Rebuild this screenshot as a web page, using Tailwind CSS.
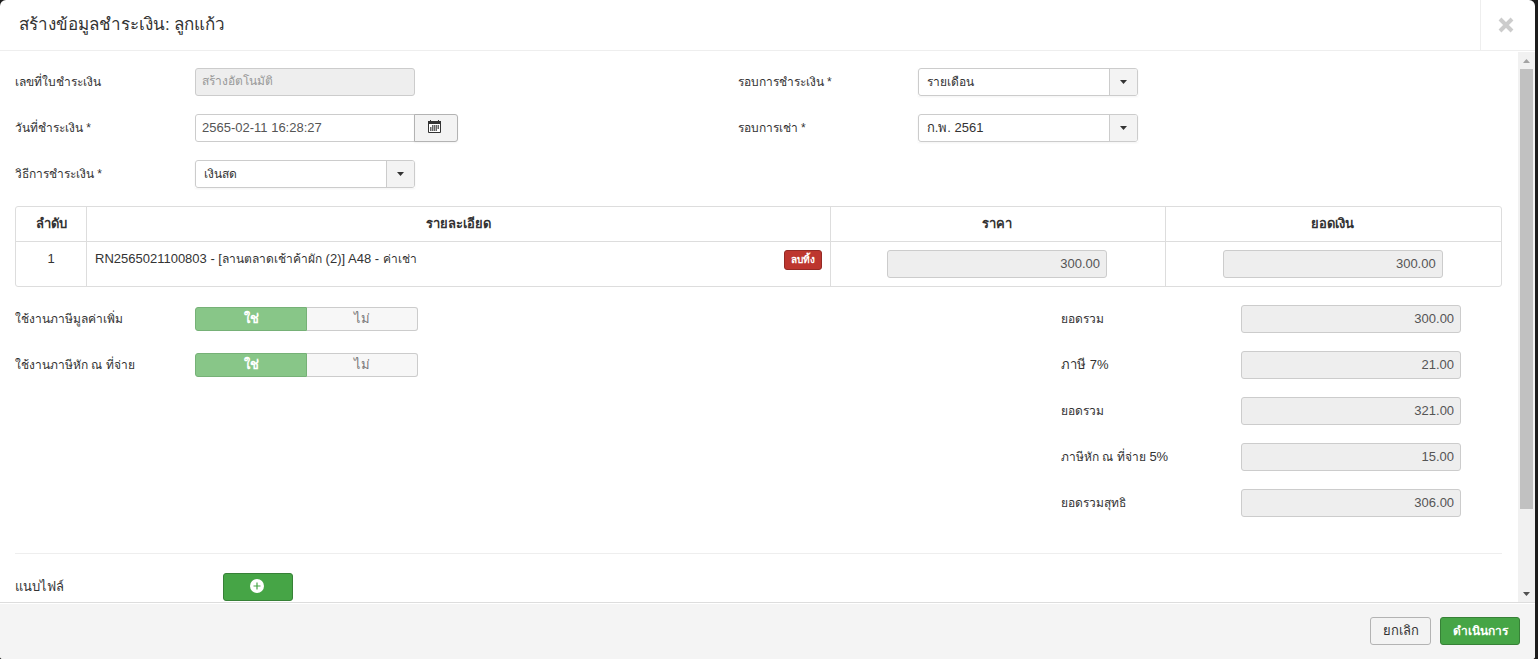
<!DOCTYPE html>
<html lang="th">
<head>
<meta charset="utf-8">
<title>สร้างข้อมูลชำระเงิน</title>
<script src="https://cdn.jsdelivr.net/npm/@tailwindcss/browser@4"></script>
</head>
<body class="h-screen overflow-hidden bg-[#1c1c1c] pr-[3px] font-['Liberation_Sans',sans-serif] text-[13px] leading-[18px] text-[#333]">
<div role="dialog" aria-labelledby="title" class="flex h-full flex-col overflow-hidden rounded-t-md rounded-b-[3px] bg-white">
  <header class="flex h-[51px] shrink-0 items-stretch border-b border-[#eee]">
    <h3 id="title" class="flex-1 self-center pl-[19px] text-[17px] leading-[24px]">สร้างข้อมูลชำระเงิน: ลูกแก้ว</h3>
    <button type="button" aria-label="ปิด" class="flex w-[55px] items-center justify-center border-l border-[#eee] pr-1">
      <svg class="size-4" viewBox="0 0 16 16" fill="none" stroke="#ccc" stroke-width="4"><path d="M2 2l12 12M14 2L2 14"/></svg>
    </button>
  </header>

  <div class="flex min-h-0 flex-1">
    <main class="min-w-0 flex-1 overflow-hidden pr-4 pl-[15px] pt-[17px]">
      <div class="flex">
        <div class="flex w-[48.6%] flex-col gap-[18px]">
          <div class="flex h-7 items-center">
            <label for="no" class="w-[180px] text-xs">เลขที่ใบชำระเงิน</label>
            <input id="no" disabled placeholder="สร้างอัตโนมัติ" class="h-7 w-[220px] rounded-[3px] border border-[#ccc] bg-[#eee] px-1.5 pb-0.5 text-xs placeholder:text-[#999]">
          </div>
          <div class="flex h-7 items-center">
            <label for="date" class="w-[180px] text-xs">วันที่ชำระเงิน *</label>
            <input id="date" value="2565-02-11 16:28:27" class="h-7 w-[220px] rounded-l-[3px] border border-[#ccc] bg-white px-1.5 pb-0.5 text-[#555]">
            <button type="button" aria-label="เลือกวันที่" class="-ml-px flex h-7 w-11 items-center justify-center rounded-r-[3px] border border-[#b3b3b3] bg-[#f3f3f3] pr-1 pb-1 shadow-xs">
              <svg class="size-[13px]" viewBox="0 0 13 13" fill="none"><path d="M.5 3.500h12v9H.5z" fill="#fff" stroke="#333"/><path d="M0 1h2V0h1v1h7V0h1v1h2v3H0z" fill="#333"/><path d="M4 6h7M2 8h9M2 10h7" stroke="#333" stroke-width="1.500" stroke-dasharray="1.500 .5"/></svg>
            </button>
          </div>
          <div class="flex h-7 items-center">
            <label for="method" class="w-[180px] text-xs">วิธีการชำระเงิน *</label>
            <div class="grid w-[220px] shadow-xs">
              <select id="method" class="col-start-1 row-start-1 h-7 appearance-none rounded-[3px] border border-[#ccc] bg-white px-2 text-xs text-[#333]"><option>เงินสด</option></select>
              <span class="pointer-events-none col-start-1 row-start-1 my-px mr-px flex w-7 items-center justify-center justify-self-end rounded-r-[2px] border-l border-[#ccc] bg-[#f3f3f3]"><svg class="h-1 w-[7px]" viewBox="0 0 7 4"><path d="M0 0h7L3.500 4z" fill="#333"/></svg></span>
            </div>
          </div>
        </div>
        <div class="flex flex-1 flex-col gap-[18px]">
          <div class="flex h-7 items-center">
            <label for="cycle" class="w-[180px] text-xs">รอบการชำระเงิน *</label>
            <div class="grid w-[220px] shadow-xs">
              <select id="cycle" class="col-start-1 row-start-1 h-7 appearance-none rounded-[3px] border border-[#ccc] bg-white px-2 text-xs text-[#333]"><option>รายเดือน</option></select>
              <span class="pointer-events-none col-start-1 row-start-1 my-px mr-px flex w-7 items-center justify-center justify-self-end rounded-r-[2px] border-l border-[#ccc] bg-[#f3f3f3]"><svg class="h-1 w-[7px]" viewBox="0 0 7 4"><path d="M0 0h7L3.500 4z" fill="#333"/></svg></span>
            </div>
          </div>
          <div class="flex h-7 items-center">
            <label for="rent" class="w-[180px] text-xs">รอบการเช่า *</label>
            <div class="grid w-[220px] shadow-xs">
              <select id="rent" class="col-start-1 row-start-1 h-7 appearance-none rounded-[3px] border border-[#ccc] bg-white px-2 text-[#333]"><option>ก.พ. 2561</option></select>
              <span class="pointer-events-none col-start-1 row-start-1 my-px mr-px flex w-7 items-center justify-center justify-self-end rounded-r-[2px] border-l border-[#ccc] bg-[#f3f3f3]"><svg class="h-1 w-[7px]" viewBox="0 0 7 4"><path d="M0 0h7L3.500 4z" fill="#333"/></svg></span>
            </div>
          </div>
        </div>
      </div>

      <table class="mt-[18px] w-full table-fixed border-separate border-spacing-0 rounded-[3px] border border-[#ddd]">
        <thead>
          <tr class="h-[34px]">
            <th class="w-[70px]">ลำดับ</th>
            <th class="border-l border-[#ddd]">รายละเอียด</th>
            <th class="w-[22.6%] border-l border-[#ddd] pr-0.5">ราคา</th>
            <th class="w-[22.6%] border-l border-[#ddd] pr-0.5">ยอดเงิน</th>
          </tr>
        </thead>
        <tbody>
          <tr class="align-top">
            <td class="border-t border-[#ddd] p-2 text-center">1</td>
            <td class="border-t border-l border-[#ddd] p-2">
              <div class="flex items-start justify-between">
                <span>RN2565021100803 - [<span class="text-xs">ลานตลาดเช้าค้าผัก</span> (2)] A48 - <span class="text-xs">ค่าเช่า</span></span>
                <button type="button" class="h-5 w-[38px] rounded-[3px] border border-[#942a25] bg-[#bd362f] text-[10px] leading-[16px] font-bold text-white">ลบทิ้ง</button>
              </div>
            </td>
            <td class="border-t border-l border-[#ddd] p-2 pr-2.5"><input aria-label="ราคา" readonly value="300.00" class="mx-auto block h-7 w-[220px] rounded-[3px] border border-[#ccc] bg-[#eee] px-1.5 pb-0.5 text-right text-[#555]"></td>
            <td class="border-t border-l border-[#ddd] p-2 pr-2.5"><input aria-label="ยอดเงิน" readonly value="300.00" class="mx-auto block h-7 w-[220px] rounded-[3px] border border-[#ccc] bg-[#eee] px-1.5 pb-0.5 text-right text-[#555]"></td>
          </tr>
        </tbody>
      </table>

      <div class="mt-[18px] flex">
        <div class="flex w-[70.35%] flex-col gap-[18px]">
          <div role="radiogroup" aria-labelledby="vat" class="flex h-7 items-center">
            <span id="vat" class="w-[180px] text-xs">ใช้งานภาษีมูลค่าเพิ่ม</span>
            <label class="flex h-6 w-28 items-center justify-center rounded-l-[3px] border border-[#76b177] bg-[#88c688] font-bold text-white"><input type="radio" name="vat" checked disabled class="sr-only">ใช่</label>
            <label class="flex h-6 w-[111px] items-center justify-center rounded-r-[3px] border border-l-0 border-[#ccc] bg-[#f7f7f7] text-[#777]"><input type="radio" name="vat" disabled class="sr-only">ไม่</label>
          </div>
          <div role="radiogroup" aria-labelledby="wht" class="flex h-7 items-center">
            <span id="wht" class="w-[180px] text-xs">ใช้งานภาษีหัก ณ ที่จ่าย</span>
            <label class="flex h-6 w-28 items-center justify-center rounded-l-[3px] border border-[#76b177] bg-[#88c688] font-bold text-white"><input type="radio" name="wht" checked disabled class="sr-only">ใช่</label>
            <label class="flex h-6 w-[111px] items-center justify-center rounded-r-[3px] border border-l-0 border-[#ccc] bg-[#f7f7f7] text-[#777]"><input type="radio" name="wht" disabled class="sr-only">ไม่</label>
          </div>
        </div>
        <div class="flex flex-1 flex-col gap-[18px]">
          <div class="flex h-7 items-center"><label for="s1" class="w-[180px] text-xs">ยอดรวม</label><input id="s1" readonly value="300.00" class="h-7 w-[220px] rounded-[3px] border border-[#ccc] bg-[#eee] px-1.5 pb-0.5 text-right text-[#555]"></div>
          <div class="flex h-7 items-center"><label for="s2" class="w-[180px]">ภาษี 7%</label><input id="s2" readonly value="21.00" class="h-7 w-[220px] rounded-[3px] border border-[#ccc] bg-[#eee] px-1.5 pb-0.5 text-right text-[#555]"></div>
          <div class="flex h-7 items-center"><label for="s3" class="w-[180px] text-xs">ยอดรวม</label><input id="s3" readonly value="321.00" class="h-7 w-[220px] rounded-[3px] border border-[#ccc] bg-[#eee] px-1.5 pb-0.5 text-right text-[#555]"></div>
          <div class="flex h-7 items-center"><label for="s4" class="w-[180px]"><span class="text-xs">ภาษีหัก ณ ที่จ่าย</span> 5%</label><input id="s4" readonly value="15.00" class="h-7 w-[220px] rounded-[3px] border border-[#ccc] bg-[#eee] px-1.5 pb-0.5 text-right text-[#555]"></div>
          <div class="flex h-7 items-center"><label for="s5" class="w-[180px] text-xs">ยอดรวมสุทธิ</label><input id="s5" readonly value="306.00" class="h-7 w-[220px] rounded-[3px] border border-[#ccc] bg-[#eee] px-1.5 pb-0.5 text-right text-[#555]"></div>
        </div>
      </div>

      <hr class="mt-9 mb-[19px] border-[#eee]">
      <div class="flex h-7 items-center">
        <span class="w-[208px]">แนบไฟล์</span>
        <button type="button" aria-label="เพิ่มไฟล์" class="flex h-7 w-[70px] items-center justify-center rounded-[3px] border border-[#378137] bg-[#46a546] pr-0.5 pb-0.5">
          <svg class="size-[14px]" viewBox="0 0 14 14"><circle cx="7" cy="7" r="7" fill="#fff"/><path d="M7 3.500v7M3.500 7h7" stroke="#46a546" stroke-width="1.200"/></svg>
        </button>
      </div>
    </main>

    <div aria-hidden="true" class="mt-px flex w-[17px] flex-col items-center bg-[#f1f1f1]">
      <span class="flex h-[17px] items-center"><svg class="h-1 w-[7px]" viewBox="0 0 7 4"><path d="M0 4h7L3.500 0z" fill="#a3a3a3"/></svg></span>
      <span class="min-h-0 w-[13px] basis-[440px] bg-[#c1c1c1]"></span>
      <span class="mt-auto flex h-[17px] items-center"><svg class="h-1 w-[7px]" viewBox="0 0 7 4"><path d="M0 0h7L3.500 4z" fill="#505050"/></svg></span>
    </div>
  </div>

  <footer class="flex shrink-0 items-center justify-end gap-[9px] border-t border-[#ddd] bg-[#f4f4f4] px-[15px] py-3.5 shadow-[inset_0_1px_0_#fff]">
    <button type="button" class="h-7 w-[61px] rounded-[3px] border border-[#b3b3b3] bg-[#f3f3f3]">ยกเลิก</button>
    <button type="button" class="h-7 w-20 rounded-[3px] border border-[#378137] bg-[#46a546] text-xs font-bold text-white">ดำเนินการ</button>
  </footer>
</div>
</body>
</html>
